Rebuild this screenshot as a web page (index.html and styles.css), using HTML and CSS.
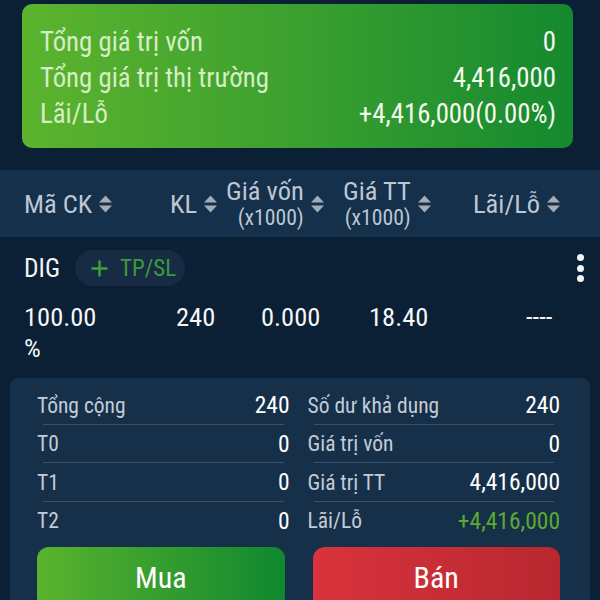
FILE: index.html
```html
<!DOCTYPE html>
<html lang="vi">
<head>
<meta charset="utf-8">
<link rel="stylesheet" href="styles.css">
</head>
<body>
<div class="summary">
  <div class="srow"><span class="sl">Tổng giá trị vốn</span><span class="sv">0</span></div>
  <div class="srow"><span class="sl">Tổng giá trị thị trường</span><span class="sv">4,416,000</span></div>
  <div class="srow"><span class="sl">Lãi/Lỗ</span><span class="sv">+4,416,000(0.00%)</span></div>
</div>

<div class="thead">
  <div class="th"><span>Mã CK</span><svg class="sort" viewBox="0 0 13 20"><path d="M0 8.5L6.5 1.5L13 8.5Z M0 11.5L13 11.5L6.5 18.5Z"/></svg></div>
  <div class="th"><span>KL</span><svg class="sort" viewBox="0 0 13 20"><path d="M0 8.5L6.5 1.5L13 8.5Z M0 11.5L13 11.5L6.5 18.5Z"/></svg></div>
  <div class="th"><span class="two">Giá vốn<small>(x1000)</small></span><svg class="sort" viewBox="0 0 13 20"><path d="M0 8.5L6.5 1.5L13 8.5Z M0 11.5L13 11.5L6.5 18.5Z"/></svg></div>
  <div class="th"><span class="two">Giá TT<small>(x1000)</small></span><svg class="sort" viewBox="0 0 13 20"><path d="M0 8.5L6.5 1.5L13 8.5Z M0 11.5L13 11.5L6.5 18.5Z"/></svg></div>
  <div class="th"><span>Lãi/Lỗ</span><svg class="sort" viewBox="0 0 13 20"><path d="M0 8.5L6.5 1.5L13 8.5Z M0 11.5L13 11.5L6.5 18.5Z"/></svg></div>
</div>

<div class="item">
  <div class="itop">
    <span class="sym">DIG</span>
    <span class="pill"><svg class="plus" viewBox="0 0 17 17"><path d="M8.5 0.5V16.5M0.5 8.5H16.5"/></svg>TP/SL</span>
    <span class="kebab"><i></i><i></i><i></i></span>
  </div>
  <div class="irow">
    <span class="pct">100.00 %</span>
    <span>240</span>
    <span>0.000</span>
    <span>18.40</span>
    <span>----</span>
  </div>
</div>

<div class="detail">
  <div class="dgrid">
    <div class="drow"><span class="dl">Tổng cộng</span><span class="dv">240</span></div>
    <div class="drow"><span class="dl">Số dư khả dụng</span><span class="dv">240</span></div>
    <div class="drow"><span class="dl">T0</span><span class="dv">0</span></div>
    <div class="drow"><span class="dl">Giá trị vốn</span><span class="dv">0</span></div>
    <div class="drow"><span class="dl">T1</span><span class="dv">0</span></div>
    <div class="drow"><span class="dl">Giá trị TT</span><span class="dv">4,416,000</span></div>
    <div class="drow last"><span class="dl">T2</span><span class="dv">0</span></div>
    <div class="drow last"><span class="dl">Lãi/Lỗ</span><span class="dv up">+4,416,000</span></div>
  </div>
  <div class="btns">
    <button class="btn buy">Mua</button>
    <button class="btn sell">Bán</button>
  </div>
</div>
</body>
</html>
```
FILE: styles.css
```css
* { box-sizing: border-box; }
html, body { margin: 0; padding: 0; }
body {
  width: 600px;
  height: 600px;
  overflow: hidden;
  background: #0b1f35;
  font-family: "Roboto Condensed", Roboto, "Liberation Sans", sans-serif;
  color: #fff;
}

.summary {
  margin: 4px 27px 0 22px;
  height: 144px;
  padding: 20px 17px 0 18px;
  border-radius: 10px;
  background: linear-gradient(90deg, #5cb42d 0%, #3fa22f 45%, #15892f 100%);
}
.srow {
  display: flex;
  justify-content: space-between;
  align-items: center;
  height: 36px;
  font-size: 26.8px;
}
.sl { color: #d6edc6; }
.sv { color: #f3faef; }

.thead {
  margin-top: 22px;
  height: 67px;
  background: #15304a;
  display: grid;
  grid-template-columns: 146px 56px 117px 130px 1fr;
  padding-left: 24px;
  align-items: center;
  color: #bcc7d3;
  font-size: 26.5px;
}
.th { display: flex; align-items: center; gap: 7px; }
.two { display: flex; flex-direction: column; align-items: flex-end; line-height: 27px; }
.two small { font-size: 21.7px; line-height: 27px; }
.sort { width: 13px; height: 20px; fill: #a3abb5; flex: none; }

.item { padding: 13px 0 0 24px; }
.itop { display: flex; align-items: center; height: 36px; }
.sym { font-size: 25.5px; color: #f2f4f6; }
.pill {
  margin-left: 15px;
  width: 110px;
  height: 36px;
  padding-left: 16px;
  border-radius: 18px;
  background: #172c44;
  color: #3c9b3a;
  font-size: 23px;
  display: flex;
  align-items: center;
  gap: 12px;
}
.plus { width: 17px; height: 17px; stroke: #3aa535; stroke-width: 2.4; fill: none; flex: none; }
.kebab {
  margin-left: auto;
  margin-right: 16.5px;
  display: flex;
  flex-direction: column;
  gap: 3.5px;
}
.kebab i { display: block; width: 7px; height: 7px; border-radius: 50%; background: #f3f5f7; }

.irow {
  display: grid;
  grid-template-columns: 152px 85px 108px 157px 1fr;
  margin-top: 14.5px;
  font-size: 26.5px;
  line-height: 31px;
  color: #f4f6f8;
  height: 62px;
}
.pct { max-width: 90px; }

.detail {
  margin: 15.5px 10px 0 10px;
  padding: 8px 30px 20px 27px;
  background: #16304a;
  border-radius: 8px;
}
.dgrid {
  display: grid;
  grid-template-columns: 1fr 1fr;
  column-gap: 18px;
}
.drow {
  height: 38.5px;
  display: flex;
  justify-content: space-between;
  align-items: center;
  background: linear-gradient(#3a5169, #3a5169) no-repeat center bottom / calc(100% - 12px) 1px;
}
.drow.last { background: none; }
.dl { font-size: 21.5px; color: #c3ccd6; }
.dv { font-size: 23.5px; color: #fff; }
.dv.up { color: #5aaa32; }

.btns {
  margin-top: 7px;
  display: grid;
  grid-template-columns: 1fr 1fr;
  column-gap: 28px;
}
.btn {
  height: 62px;
  border: 0;
  border-radius: 12px;
  color: #fff;
  font-family: inherit;
  font-size: 30px;
  padding: 0 0 2px;
}
.buy { background: linear-gradient(90deg, #5ab32d, #10882f); }
.sell { background: linear-gradient(90deg, #d9333d, #b8272f); }
```
